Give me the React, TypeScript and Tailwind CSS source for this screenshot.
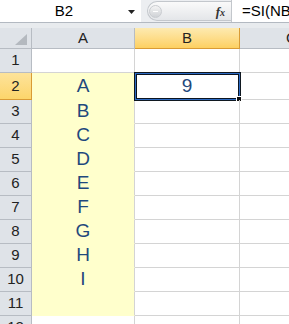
import React from "react";

const font = "font-['Liberation_Sans',Arial,sans-serif]";

// row heights in px, row 1..12
const rows: { n: number; h: string; letter?: string }[] = [
  { n: 1, h: "h-[24px]" },
  { n: 2, h: "h-[27px]", letter: "A" },
  { n: 3, h: "h-[24px]", letter: "B" },
  { n: 4, h: "h-[24px]", letter: "C" },
  { n: 5, h: "h-[24px]", letter: "D" },
  { n: 6, h: "h-[24px]", letter: "E" },
  { n: 7, h: "h-[24px]", letter: "F" },
  { n: 8, h: "h-[24px]", letter: "G" },
  { n: 9, h: "h-[24px]", letter: "H" },
  { n: 10, h: "h-[24px]", letter: "I" },
  { n: 11, h: "h-[24px]", letter: "" },
  { n: 12, h: "h-[24px]" },
];

const FormulaBar: React.FC = () => (
  <>
    <div className="flex h-[23px] border-b border-[#b3b9c1]">
      {/* Name box */}
      <div className="w-[141px] bg-white flex items-center">
        <div className="w-[128px] flex justify-center text-[15px] text-black">B2</div>
        <svg width="7" height="4" viewBox="0 0 7 4" className="mt-[2px]">
          <polygon points="0,0 7,0 3.5,4" fill="#222" />
        </svg>
      </div>
      {/* grip + fx */}
      <div className="w-[90px] bg-[#eceef1] flex items-center pl-[6px]">
        <div className="flex-1 h-[20px] rounded-l-full border border-r-0 border-[#c3c7cc] bg-gradient-to-b from-[#fafafa] to-[#e4e6e9] flex items-center pl-[1px]">
          <div className="w-[13px] h-[13px] rounded-full bg-gradient-to-b from-[#f4f4f4] to-[#cfd2d6] border border-[#c9ccd0] flex items-center justify-center">
            <div className="w-[5px] h-[1px] bg-white" />
          </div>
          <div className="flex-1" />
          <span className="font-['Liberation_Serif',serif] italic font-bold text-[13px] text-[#333] mr-[6px] leading-none">
            f<span className="text-[10px]">x</span>
          </span>
        </div>
      </div>
      {/* formula input */}
      <div className="flex-1 bg-white border-l border-[#c3c7cc] flex items-center pl-[10px] text-[15px] text-black whitespace-nowrap overflow-hidden">
        =SI(NB.SI($A$2:$A$11;&quot;?*&quot;)
      </div>
    </div>
    <div className="h-[5px] bg-[#e8ebee]" />
  </>
);

const HeaderRow: React.FC = () => (
  <div className="flex h-[21px] text-[15px] text-[#222]">
    <div className="w-[32px] shrink-0 bg-[#dfe3e8] border-r border-b border-[#b7bcc3] flex items-end justify-end pr-[4px] pb-[3px]">
      <svg width="12" height="11" viewBox="0 0 12 11">
        <polygon points="12,0 12,11 0,11" fill="#b4b9bf" />
      </svg>
    </div>
    <div className="w-[103px] shrink-0 bg-[#dfe3e8] border-r border-b border-[#b7bcc3] flex items-center justify-center">
      A
    </div>
    <div className="w-[105px] shrink-0 bg-gradient-to-b from-[#fdeab0] to-[#fdd060] border-r border-b border-[#d99b35] flex items-center justify-center">
      B
    </div>
    <div className="w-[104px] shrink-0 bg-[#dfe3e8] border-r border-b border-[#b7bcc3] flex items-center justify-center">
      C
    </div>
  </div>
);

export default function App() {
  return (
    <div className={`w-[289px] h-[324px] overflow-hidden bg-white ${font}`}>
      <FormulaBar />
      <div className="w-[344px]">
        <HeaderRow />
        {rows.map((r) => {
          const filled = r.letter !== undefined;
          const selected = r.n === 2;
          return (
            <div key={r.n} className={`flex ${r.h}`}>
              <div
                className={`w-[32px] shrink-0 border-r border-b flex items-center justify-center text-[15px] text-[#222] ${
                  selected
                    ? "bg-gradient-to-b from-[#fde39a] to-[#fcd56a] border-[#d99b35]"
                    : "bg-[#dfe3e8] border-[#b7bcc3]"
                }`}
              >
                {r.n}
              </div>
              <div
                className={`w-[103px] shrink-0 border-r flex items-center justify-center text-[19px] text-[#1f497d] ${
                  filled ? "bg-[#ffffcc] border-b border-b-[#ffffcc] border-r-[#d4d4d4]" : "border-b border-[#d4d4d4]"
                }`}
              >
                {r.letter}
              </div>
              <div className="w-[105px] shrink-0 border-r border-b border-[#d4d4d4] relative flex items-center justify-center text-[19px] text-[#1f497d]">
                {selected && (
                  <>
                    9
                    <div className="absolute -left-[1px] -top-[1px] w-[107px] h-[29px] border border-[#101820] shadow-[inset_0_0_0_1px_#2d6bc4,inset_0_0_0_2px_#0b1420]" />
                    <div className="absolute -right-[3px] -bottom-[3px] w-[6px] h-[6px] bg-[#101010] border border-white" />
                  </>
                )}
              </div>
              <div className="w-[104px] shrink-0 border-r border-b border-[#d4d4d4]" />
            </div>
          );
        })}
      </div>
    </div>
  );
}
